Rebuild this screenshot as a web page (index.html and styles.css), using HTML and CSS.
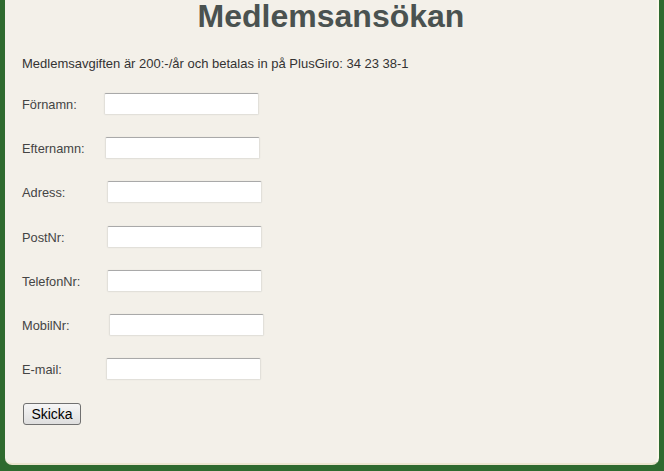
FILE: index.html
```html
<!DOCTYPE html>
<html lang="sv">
<head>
<meta charset="utf-8">
<title>Medlemsansökan</title>
<link rel="stylesheet" href="styles.css">
</head>
<body>
<div class="panel">
  <h1 class="title">Medlemsansökan</h1>
  <p class="intro">Medlemsavgiften är 200:-/år och betalas in på PlusGiro: 34 23 38-1</p>
  <form class="form">
    <div class="row"><label class="lbl">Förnamn:</label><input class="field" type="text"></div>
    <div class="row"><label class="lbl">Efternamn:</label><input class="field off1" type="text"></div>
    <div class="row"><label class="lbl">Adress:</label><input class="field off3" type="text"></div>
    <div class="row"><label class="lbl">PostNr:</label><input class="field off3" type="text"></div>
    <div class="row"><label class="lbl">TelefonNr:</label><input class="field off3" type="text"></div>
    <div class="row"><label class="lbl">MobilNr:</label><input class="field off5" type="text"></div>
    <div class="row"><label class="lbl">E-mail:</label><input class="field off2" type="text"></div>
    <div class="actions"><button class="btn" type="button">Skicka</button></div>
  </form>
</div>
</body>
</html>
```
FILE: styles.css
```css
html, body {
  margin: 0;
  padding: 0;
  height: 100%;
}
body {
  background: #2e6a2f;
  font-family: "Liberation Sans", Arial, sans-serif;
  overflow: hidden;
}
.panel {
  box-sizing: border-box;
  margin: -10px 5px 0 5px;
  height: 475px;
  padding: 10px 0 0 17px;
  background: #f3f0e9;
  border-right: 2px solid #fbf8ec;
  border-bottom: 2px solid #ebe5cf;
  border-radius: 0 0 7px 7px;
}
.title {
  margin: 0;
  padding-right: 17px;
  font-size: 32px;
  line-height: 32px;
  font-weight: bold;
  text-align: center;
  color: #4a5250;
}
.intro {
  margin: 24px 0 0 0;
  font-size: 13px;
  line-height: 16px;
  color: #333;
}
.form {
  margin-top: 21px;
  display: flex;
  flex-direction: column;
  gap: 22.2px;
}
.row {
  display: grid;
  grid-template-columns: 82px auto;
  align-items: center;
  justify-content: start;
}
.lbl {
  font-size: 12.8px;
  color: #444;
  padding-top: 1px;
}
.field {
  box-sizing: border-box;
  width: 155px;
  height: 22px;
  margin: 0;
  background: #fff;
  border: 1px solid #e2e0da;
  border-top-color: #a9a9a9;
  border-radius: 2px;
  box-shadow: 0 0 2px rgba(0, 0, 0, 0.06);
  font: 13px "Liberation Sans", Arial, sans-serif;
}
.off1 { margin-left: 1px; }
.off2 { margin-left: 2px; }
.off3 { margin-left: 3px; }
.off5 { margin-left: 5px; }
.actions {
  padding-left: 1px;
  padding-top: 1px;
}
.btn {
  box-sizing: border-box;
  width: 58px;
  height: 22px;
  padding: 0;
  font: 14px "Liberation Sans", Arial, sans-serif;
  color: #000;
  background: linear-gradient(#f6f6f6, #dedede);
  border: 1px solid #707070;
  border-radius: 3px;
}
```
